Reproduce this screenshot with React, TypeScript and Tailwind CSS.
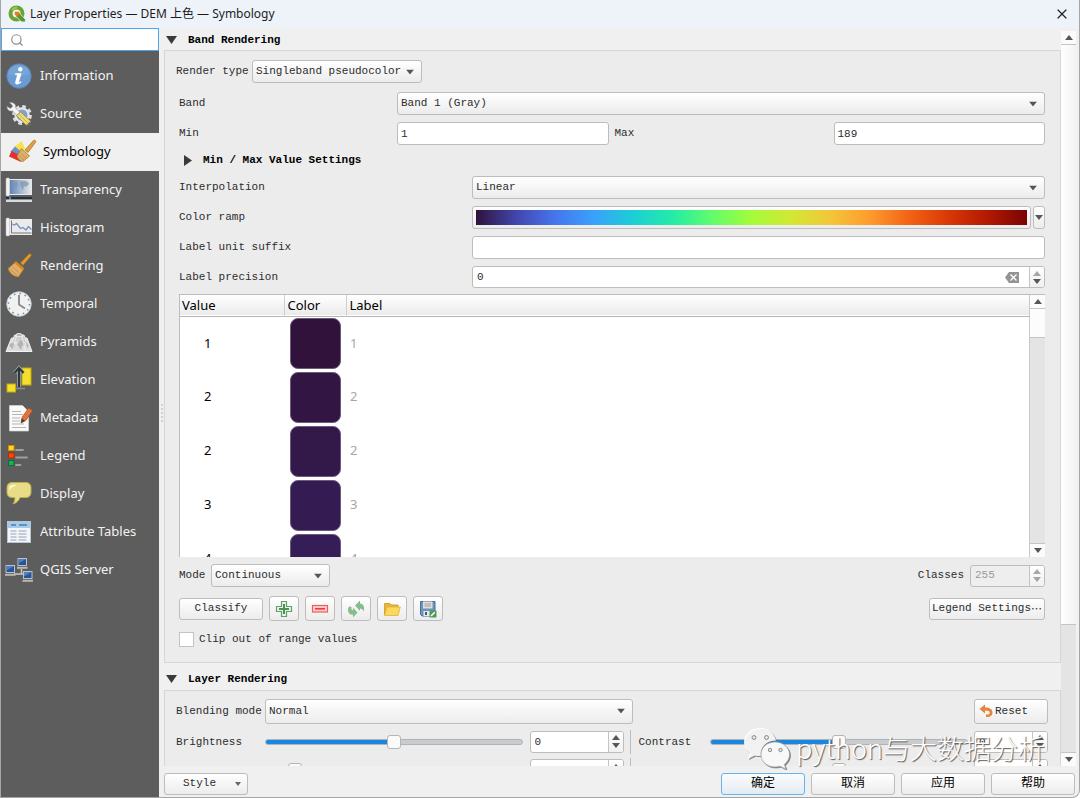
import React, { useState } from 'react';
import { Search, X } from 'lucide-react';
import clsx from 'clsx';

const MONO = "font-['Liberation_Mono','Noto_Sans_CJK_SC',monospace] text-[11px]";

const RAISED = 'rounded-[3px] border border-[#bdbdbd] bg-linear-to-b from-white to-[#ececec]';

const TURBO = [
  '#30123b', '#4145ab', '#4675ed', '#39a2fc', '#1bcfd4', '#24eca6', '#61fc6c',
  '#a4fc3b', '#d1e834', '#f3c63a', '#fe9b2d', '#f36315', '#d93806', '#b11901', '#7a0402',
];

interface RampEntry {
  value: number;
  swatch: string;
}

const rampEntries: RampEntry[] = [
  { value: 1, swatch: 'bg-[#30123b]' },
  { value: 2, swatch: 'bg-[#321543]' },
  { value: 2, swatch: 'bg-[#33184a]' },
  { value: 3, swatch: 'bg-[#341b51]' },
  { value: 4, swatch: 'bg-[#351e58]' },
];

/* ---------- icons ---------- */

const QgisLogo = () => (
  <svg viewBox="0 0 18 18" className="size-[18px]" aria-hidden="true">
    <circle cx="8.5" cy="8.5" r="6" fill="none" stroke="#6aa52f" strokeWidth="4" />
    <path d="M4 5a6 6 0 0 1 5-2.5" fill="none" stroke="#9cc94f" strokeWidth="2" />
    <path d="M8 8h3.4l6 6.4V17h-3.8L8 11.4z" fill="#589632" stroke="#eef4fb" strokeWidth=".8" />
    <path d="M6.8 6.8h3.8l1.4 1.8-2.8 2.6-2.4-1.4z" fill="#ee7913" />
  </svg>
);

const InformationIcon = () => (
  <>
    <circle cx="13" cy="13" r="12.3" fill="#6c9bd2" stroke="#4f7fb8" strokeWidth=".8" />
    <path d="M2 11a11.2 11.2 0 0 1 22 0c-6 3-16 3-22 0z" fill="#8ab2de" opacity=".4" />
    <circle cx="14.3" cy="6.3" r="2.2" fill="#fff" />
    <path d="M9.2 10.3h6.400l-2.500 8.300c-.2.8.4.8 1.700-.4l.9.9c-3.200 3.500-7.400 3.200-6.400-.3l1.700-6.200c.2-.8-.4-1-1.900-.9z" fill="#fff" />
  </>
);

const SourceIcon = () => (
  <>
    <circle cx="16" cy="14" r="8.4" fill="none" stroke="#dedede" strokeWidth="3" strokeDasharray="3.6 3" />
    <circle cx="16" cy="14" r="6.6" fill="#7da3cf" stroke="#e6e6e6" strokeWidth="2.2" />
    <path d="M3.5 1.5c4-.6 6.8 2 6.2 5.5l4.2 4.2-3 3.2-4.3-4.5C3 10.700 1 8.400 1 5.500l3.600 2 2.300-2.400z" fill="#f4f4f2" stroke="#9b9b9b" strokeWidth=".7" />
    <path d="m10.500 14.500 4-3.500 10 9-.5 3.500-4 .5z" fill="#f0dc7a" stroke="#9c8a3e" strokeWidth=".8" />
    <path d="m12.500 13 9.500 9" stroke="#b9a552" strokeWidth=".8" />
    <path d="m21 23.500 3-.2.5-2.600z" fill="#444" />
  </>
);

const SymbologyIcon = () => (
  <>
    <path d="M5 8 13 2l3 8-8 5z" fill="#f6e24c" />
    <path d="M1.500 12.500 6 7.500l6 5-5 6z" fill="#6a94cc" />
    <path d="M0 17.500 2.500 12l8 4 1.500 7z" fill="#e3322b" />
    <path d="m16 11 8.500-9.500c1.400-1 2.800.4 2 1.800L19 13.500z" fill="#e0a040" stroke="#a76c1c" strokeWidth=".7" />
    <path d="m12.500 9.500 8 7.500-6.500 5.500c-3.500-.6-5.600-3-6-5.500z" fill="#ddb06a" stroke="#a9762c" strokeWidth=".8" />
    <path d="m10 17 5 4m-3-6 5 4" stroke="#b98441" strokeWidth=".7" />
  </>
);

const TransparencyIcon = () => (
  <>
    <defs>
      <linearGradient id="fade" x1="0" x2="1">
        <stop offset="0" stopColor="#5f86b8" />
        <stop offset="1" stopColor="#e4e8ec" />
      </linearGradient>
    </defs>
    <rect x="1" y="2" width="25" height="16" fill="#e8e8e8" />
    <rect x="4" y="3" width="21" height="14" fill="url(#fade)" />
    <path d="M6 6c3-2 6-1 6 1s-2 2-2 5c-2-1-4-4-4-6zm8-1c4-2 8-1 9 2-1 2-2 1-3 3l-2-1-1 4c-2-1-3-6-3-8z" fill="#8296ae" opacity=".75" />
    <rect x="0" y="1" width="3.500" height="18" rx="1" fill="#f2f2f2" stroke="#b8b8b8" strokeWidth=".5" />
    <rect x="0" y="20" width="26" height="2.500" fill="#25313d" />
    <rect x="3" y="19.500" width="2" height="3.500" fill="#4b86c6" />
    <rect x="0" y="22.500" width="26" height="2.500" fill="#d9d9d9" />
  </>
);

const HistogramIcon = () => (
  <>
    <rect x="1" y="4" width="25" height="16" fill="#ebebeb" />
    <path d="M5.500 5.500v12.500h20" fill="none" stroke="#777" strokeWidth="1" />
    <path d="m6 9 2.500 1 2-1.500 4 5 2.500-1 3 2.500 2.500-3.500 3 3" fill="none" stroke="#7296c0" strokeWidth="1.300" />
    <rect x="0" y="3" width="3.500" height="18" rx="1" fill="#f3f3f3" stroke="#b8b8b8" strokeWidth=".5" />
  </>
);

const RenderingIcon = () => (
  <>
    <path d="m14.500 10 8.500-9c1.400-.8 2.800.5 2 1.900L17 12.500z" fill="#e59b33" stroke="#a86a17" strokeWidth=".7" />
    <path d="m10 8.500 8 7-5.500 8.500C7 23.500 3 19.500 2 15.500z" fill="#e0b06a" stroke="#a6712a" strokeWidth=".8" />
    <path d="m3.500 16 8 6.500M6 13.500l7.500 6.500" stroke="#c08a45" strokeWidth=".8" />
    <path d="m10 8.500 8 7-1.300 2-8.500-7.300z" fill="#d98c26" />
  </>
);

const TemporalIcon = () => (
  <>
    <circle cx="13" cy="13" r="12.300" fill="#f1f1f0" stroke="#c8c8c8" strokeWidth=".8" />
    <circle cx="13" cy="13" r="10.500" fill="none" stroke="#5c8fc9" strokeWidth="1.500" strokeDasharray="1.500 4" />
    <path d="M13 4v9.500l6 4" fill="none" stroke="#8a8a8a" strokeWidth="1.900" />
  </>
);

const PyramidsIcon = () => (
  <>
    <path d="M5.500 9h15.500l5 13.500H0z" fill="#dcdcdc" stroke="#f2f2f2" strokeWidth="1" />
    <path d="M8.500 6h9.500l3 8H6z" fill="#cfcfcf" stroke="#f0f0f0" strokeWidth=".9" />
    <path d="M11 4.500h4l2 3H9.500z" fill="#b5b5b5" stroke="#ededed" strokeWidth=".8" />
    <path d="m3 16 4-3 2 4-2 4zm8-1 4-4 4 4-3 2-1 4zm9-3 3 5-2 2z" fill="#a9a9a9" opacity=".8" />
    <path d="M6.500 22.500 11 5m8.500 17.500L15.500 5" stroke="#f4f4f4" strokeWidth=".7" />
  </>
);

const ElevationIcon = () => (
  <>
    <rect x="16" y="1" width="9" height="17" fill="#f2e02a" stroke="#c7a90c" />
    <rect x="1" y="17" width="8.500" height="8" fill="#f2e02a" stroke="#c7a90c" />
    <path d="M10 21.500h9" stroke="#8b8b8b" strokeWidth="1.500" />
    <path d="M13 20V2M8.500 6 13 1l4.500 5" fill="none" stroke="#9aa4a8" strokeWidth="3.600" />
    <path d="M13 20V2M8.500 6 13 1l4.500 5" fill="none" stroke="#2d373c" strokeWidth="2" />
  </>
);

const MetadataIcon = () => (
  <>
    <path d="M3.500.500h13l6 6V26h-19z" fill="#fafafa" stroke="#d6d6d6" strokeWidth=".7" />
    <path d="M6 6.500h9M6 9.500h11M6 13h8M6 16h8M6 19h12M6 22.500h14" stroke="#b4b4b4" strokeWidth="1.200" />
    <path d="m15 18 1-5.500L22.500 3l4 2.600-6.500 9.800z" fill="#e2733d" stroke="#a94f23" strokeWidth=".7" />
    <path d="m15 18 .8-4.500 3.200 2.200z" fill="#3c3c3c" />
  </>
);

const LegendIcon = () => (
  <>
    <rect x="2.500" y="2.500" width="5.500" height="5" fill="#ffd52b" stroke="#d28a00" />
    <rect x="2.500" y="10" width="5.500" height="5" fill="#fa4616" stroke="#b82d00" />
    <rect x="2.500" y="17.500" width="5.500" height="5" fill="#16b25c" stroke="#0c6b36" />
    <path d="M10 7h7M10 14.500h11M10 22h4.500" stroke="#9f9f9f" strokeWidth="1.800" strokeLinecap="round" />
  </>
);

const DisplayIcon = () => (
  <>
    <path d="M6 1.500h14c3 0 5 2 5 5v5c0 3-2 5-5 5h-6c-1 3-3.500 5.500-7 6.500 1.500-2 2-4 1.800-6.500H6c-3 0-5-2-5-5v-5c0-3 2-5 5-5z" fill="#e8dc86" stroke="#bcae4d" />
    <path d="M3.500 10V7.500c0-2 1.200-3.400 3.500-3.400h5c-4 .8-7 2-8.500 5.900z" fill="#fffbe2" />
  </>
);

const AttributeTablesIcon = () => (
  <>
    <rect x="1.500" y="2.500" width="23" height="21" fill="#f3f5f6" stroke="#b5c6d6" />
    <rect x="2" y="3" width="22" height="6" fill="#a5cbe8" />
    <path d="M5 6h5m3 0h8" stroke="#4e7eae" strokeWidth="1.300" />
    <path d="M4.500 12h6m2 0h8M4.500 15h6m2 0h8M4.500 18h6m2 0h8M4.500 21h6m2 0h8" stroke="#8fa6c4" strokeWidth="1.200" />
  </>
);

const Computer = ({ x, y }: { x: number; y: number }) => (
  <g transform={`translate(${x} ${y})`}>
    <rect x="1" y="0" width="8.500" height="7" fill="#27549b" stroke="#b9c1c8" />
    <path d="M1.500.500h7.500L1.500 5z" fill="#5580c0" />
    <path d="M0 9.300h10.500" stroke="#b9b9b0" strokeWidth="2" />
  </g>
);

const ServerIcon = () => (
  <>
    <path d="M15.500 12v5M8 17h9" stroke="#c9c9c3" strokeWidth="1.500" />
    <Computer x={-1} y={8.500} />
    <Computer x={11} y={1.500} />
    <Computer x={16.500} y={14.500} />
  </>
);

const AddIcon = () => (
  <svg viewBox="0 0 18 18" className="size-[18px]" aria-hidden="true">
    <path d="M6.500 1.500h5v5h5v5h-5v5h-5v-5h-5v-5h5z" fill="#e9f3e9" stroke="#62a169" strokeWidth="1.200" />
    <path d="M9 4v10M4 9h10" stroke="#4a9153" strokeWidth="2" />
  </svg>
);

const RemoveIcon = () => (
  <svg viewBox="0 0 18 18" className="size-[18px]" aria-hidden="true">
    <rect x="1.500" y="5.500" width="15" height="6.500" fill="#fbd0d0" stroke="#f15b5b" strokeWidth="1.200" />
    <path d="M4 8.800h10" stroke="#e84040" strokeWidth="1.700" />
  </svg>
);

const ReloadIcon = () => (
  <svg viewBox="0 0 18 18" className="size-[18px]" aria-hidden="true">
    <path d="M8 5.500 13 .500v3c3.500.5 5 3.500 3.500 8-.8-2.200-1.800-3-3.500-3V11z" fill="#85bd8b" />
    <path d="M10.500 12.500 6 17.500v-2.800C2 15 0 11.500 1.500 7.500c.5-1.500 3.500-1 3 .5-.4 1.400.2 2 1.500 2V7.500z" fill="#85bd8b" />
  </svg>
);

const FolderIcon = () => (
  <svg viewBox="0 0 18 18" className="size-[18px]" aria-hidden="true">
    <path d="M1.500 15V3.500h5.500L8.500 5H15v3" fill="#e5b83c" stroke="#cfa02c" strokeWidth=".9" />
    <path d="M1.500 15.500 4 7h13.300L15 15.500z" fill="#fcd95d" stroke="#e0b23a" strokeWidth=".8" />
  </svg>
);

const SaveIcon = () => (
  <svg viewBox="0 0 18 18" className="size-[18px]" aria-hidden="true">
    <path d="M1.500 1.500h14.500v14.500H3l-1.500-1.500z" fill="#6d93bd" stroke="#4a6f99" />
    <rect x="4" y="1.500" width="9.500" height="7" fill="#dedede" />
    <path d="M5.500 4h6.500M5.500 6h6.500" stroke="#999" strokeWidth=".9" />
    <rect x="4.500" y="11" width="7" height="5" fill="#e7e7e7" />
    <rect x="6" y="12" width="2" height="3" fill="#3d5a7c" />
    <rect x="10.500" y="10.500" width="7" height="7" rx="1" fill="#4f9a57" />
    <path d="m12 16 3.800-3.800" stroke="#fff" strokeWidth="1.500" />
  </svg>
);

const UndoIcon = () => (
  <svg viewBox="0 0 14 14" className="size-[14px]" aria-hidden="true">
    <path d="M.500 5 6 .500v3c5 0 7.500 2 7.500 5S11 13.500 7 13v-2.500c2.500.3 3.700-.3 3.700-1.700S9.500 6.500 6 6.500v3z" fill="#e8833f" />
  </svg>
);

const Triangle = ({ className }: { className?: string }) => (
  <svg viewBox="0 0 8 5" className={clsx('h-[5px] w-2 fill-[#565656]', className)} aria-hidden="true">
    <path d="M0 0h8L4 5z" />
  </svg>
);

/* ---------- controls ---------- */

interface ComboProps {
  id: string;
  options: string[];
  className?: string;
  height?: string;
}

const Combo: React.FC<ComboProps> = ({ id, options, className, height = 'h-[23px]' }) => (
  <div className={clsx('relative', className)}>
    <select id={id} className={clsx('block w-full appearance-none pr-5 pl-[3px] outline-none', height, RAISED)}>
      {options.map(option => (
        <option key={option}>{option}</option>
      ))}
    </select>
    <Triangle className="pointer-events-none absolute top-1/2 right-2 -translate-y-1/2" />
  </div>
);

interface SpinProps {
  id: string;
  value: string;
  label?: string;
  className?: string;
  disabled?: boolean;
  atMinimum?: boolean;
  clearable?: boolean;
}

const SpinBox: React.FC<SpinProps> = ({ id, value, label, className, disabled, atMinimum, clearable }) => (
  <div
    className={clsx(
      'flex h-[22px] items-stretch overflow-hidden rounded-[3px] border border-[#bdbdbd]',
      disabled ? 'bg-[#eeeeee] text-[#9a9a9a]' : 'bg-white',
      className,
    )}
  >
    <input id={id} aria-label={label} defaultValue={value} disabled={disabled} className="w-0 grow pl-1 outline-none" />
    {clearable && (
      <button type="button" aria-label="Clear" className="mr-[10px]">
        <svg viewBox="0 0 14 11" className="h-[11px] w-[14px]" aria-hidden="true">
          <path d="M4 0h10v11H4L0 5.500z" fill="#949494" />
          <path d="m5.500 2.500 6 6m0-6-6 6" stroke="#fff" strokeWidth="1.400" />
        </svg>
      </button>
    )}
    <div className="flex w-[15px] flex-col items-center justify-center gap-[3px] border-l border-[#c4c4c4] bg-linear-to-b from-white to-[#f0f0f0]">
      <button type="button" aria-label="Increase">
        <Triangle className={clsx('rotate-180', (atMinimum || disabled) && 'opacity-50')} />
      </button>
      <button type="button" aria-label="Decrease">
        <Triangle className={clsx(disabled && 'opacity-50')} />
      </button>
    </div>
  </div>
);

const Slider = ({ id, initial, label }: { id: string; initial: number; label?: string }) => {
  const [value, setValue] = useState(initial);
  return (
    <input
      id={id}
      type="range"
      aria-label={label}
      value={value}
      onChange={e => setValue(Number(e.target.value))}
      style={{ backgroundImage: `linear-gradient(to right, #1c86dd ${value}%, #cbcbcb ${value}%)` }}
      className="h-[6px] w-full min-w-0 appearance-none rounded-sm border border-[#a9b4bd] [&::-webkit-slider-thumb]:size-[14px] [&::-webkit-slider-thumb]:appearance-none [&::-webkit-slider-thumb]:rounded-[3px] [&::-webkit-slider-thumb]:border [&::-webkit-slider-thumb]:border-[#b5b5b5] [&::-webkit-slider-thumb]:bg-[#fafafa]"
    />
  );
};

const ToolButton = ({ label, children }: { label: string; children: React.ReactNode }) => (
  <button type="button" aria-label={label} className={clsx('flex h-[25px] w-[30px] items-center justify-center', RAISED)}>
    {children}
  </button>
);

const GroupTitle = ({ children }: { children: React.ReactNode }) => (
  <h2 className="flex items-center gap-[11px] pl-[2px] font-bold text-black">
    <svg viewBox="0 0 11 8" className="h-2 w-[11px]" aria-hidden="true">
      <path d="M0 0h11L5.500 8z" fill="#3a3a3a" />
    </svg>
    {children}
  </h2>
);

const ScrollButton = ({ down }: { down?: boolean }) => (
  <button
    type="button"
    aria-label={down ? 'Scroll down' : 'Scroll up'}
    className="flex h-[14px] w-full shrink-0 items-center justify-center border-[#c4c4c4] bg-[#fbfbfb] not-last:border-b last:border-t"
  >
    <Triangle className={clsx(!down && 'rotate-180')} />
  </button>
);

const field = 'h-[23px] w-full min-w-0 rounded-[3px] border border-[#bdbdbd] bg-white px-[3px] outline-none';

/* ---------- sections ---------- */

interface Page {
  name: string;
  Icon: React.FC;
}

const pages: Page[] = [
  { name: 'Information', Icon: InformationIcon },
  { name: 'Source', Icon: SourceIcon },
  { name: 'Symbology', Icon: SymbologyIcon },
  { name: 'Transparency', Icon: TransparencyIcon },
  { name: 'Histogram', Icon: HistogramIcon },
  { name: 'Rendering', Icon: RenderingIcon },
  { name: 'Temporal', Icon: TemporalIcon },
  { name: 'Pyramids', Icon: PyramidsIcon },
  { name: 'Elevation', Icon: ElevationIcon },
  { name: 'Metadata', Icon: MetadataIcon },
  { name: 'Legend', Icon: LegendIcon },
  { name: 'Display', Icon: DisplayIcon },
  { name: 'Attribute Tables', Icon: AttributeTablesIcon },
  { name: 'QGIS Server', Icon: ServerIcon },
];

const Sidebar = () => {
  const [current, setCurrent] = useState('Symbology');

  return (
    <aside className="flex w-[158px] shrink-0 flex-col bg-[#5d5d5d]">
      <label className="flex h-[23px] items-center border border-[#4da6ef] bg-white pl-2">
        <Search className="size-[14px] text-[#8d8d8d]" strokeWidth={2} />
        <input aria-label="Search" className="w-0 grow outline-none" />
      </label>
      <nav className="mt-[6px] flex flex-col">
        {pages.map(({ name, Icon }) => (
          <button
            key={name}
            type="button"
            onClick={() => setCurrent(name)}
            className={clsx(
              'flex h-[38px] items-center gap-2 text-left text-[13px]',
              name === current ? 'bg-[#f0f0f0] pl-2 text-black' : 'pl-[5px] text-[#f2f2f2]',
            )}
          >
            <svg viewBox="0 0 26 26" className="size-[26px] overflow-visible" aria-hidden="true">
              <Icon />
            </svg>
            {name}
          </button>
        ))}
      </nav>
    </aside>
  );
};

const RampTable = () => (
  <div className="flex h-[263px] border-t border-l border-[#bdbdbd] bg-white font-['Noto_Sans',sans-serif] text-[13px] text-black">
    <div className="min-w-0 grow overflow-hidden">
      <table className="w-full table-fixed border-collapse">
        <thead>
          <tr className="h-[21px] border-b border-[#b5b5b5] bg-linear-to-b from-white to-[#ebebeb] text-left leading-5">
            <th className="w-[104px] border-r border-[#cfcfcf] pl-[2px] font-normal">Value</th>
            <th className="w-[62px] border-r border-[#cfcfcf] pl-[3px] font-normal">Color</th>
            <th className="pl-[3px] font-normal">Label</th>
          </tr>
        </thead>
        <tbody>
          {rampEntries.map((entry, i) => (
            <tr key={i} className="h-[54px]">
              <td className="pl-6">{entry.value}</td>
              <td className="pl-[6px]">
                <div className={clsx('size-[51px] rounded-lg border border-[#6d5a80]', entry.swatch)} />
              </td>
              <td className="pl-1 text-[#a6a6a6]">{entry.value}</td>
            </tr>
          ))}
        </tbody>
      </table>
    </div>
    <div className="flex w-4 shrink-0 flex-col border-l border-[#c9c9c9] bg-[#e4e4e4]">
      <ScrollButton />
      <div className="h-[29px] border-b border-[#c4c4c4] bg-[#fcfcfc]" />
      <div className="grow" />
      <ScrollButton down />
    </div>
  </div>
);

const BandRendering = () => (
  <section>
    <div className="flex h-[22px] items-center pt-[2px]">
      <GroupTitle>Band Rendering</GroupTitle>
    </div>
    <div className="border border-[#d6d6d6] bg-[#ececec] pt-[9px] pr-[15px] pb-[14px] pl-[14px]">
      <div className="-ml-[3px] flex items-center">
        <label htmlFor="render-type" className="w-[76px] whitespace-nowrap">Render type</label>
        <Combo id="render-type" options={['Singleband pseudocolor', 'Singleband gray']} className="w-[170px]" />
      </div>

      <div className="mt-[9px] grid grid-cols-[218px_1fr_225px_1fr] items-center gap-y-[7px]">
        <label htmlFor="band">Band</label>
        <Combo id="band" options={['Band 1 (Gray)']} className="col-span-3" />
        <label htmlFor="min">Min</label>
        <input id="min" defaultValue="1" className={field} />
        <label htmlFor="max" className="pl-[6px]">Max</label>
        <input id="max" defaultValue="189" className={field} />
      </div>

      <h3 className="flex h-[31px] items-center gap-[11px] pl-[5px] font-bold text-black">
        <svg viewBox="0 0 8 11" className="h-[11px] w-2" aria-hidden="true">
          <path d="M0 0v11l8-5.500z" fill="#3a3a3a" />
        </svg>
        Min / Max Value Settings
      </h3>

      <div className="grid grid-cols-[293px_1fr] items-center gap-y-[7px]">
        <label htmlFor="interpolation">Interpolation</label>
        <Combo id="interpolation" options={['Linear', 'Discrete', 'Exact']} />
        <span>Color ramp</span>
        <div className="flex gap-[2px]">
          <button type="button" aria-label="Color ramp" className={clsx('h-[23px] grow p-[3px]', RAISED)}>
            <div
              className="h-full w-full"
              style={{ backgroundImage: `linear-gradient(to right, ${TURBO.join(', ')})` }}
            />
          </button>
          <button type="button" aria-label="Ramp menu" className={clsx('flex w-3 items-center justify-center', RAISED)}>
            <Triangle className="shrink-0" />
          </button>
        </div>
        <label htmlFor="suffix">Label unit suffix</label>
        <input id="suffix" className={field} />
        <label htmlFor="precision">Label precision</label>
        <SpinBox id="precision" value="0" clearable atMinimum />
      </div>

      <div className="mt-[6px]">
        <RampTable />
      </div>

      <div className="mt-[7px] flex items-center justify-between">
        <div className="flex items-center">
          <label htmlFor="mode" className="w-8">Mode</label>
          <Combo id="mode" options={['Continuous', 'Equal interval', 'Quantile']} className="w-[119px]" />
        </div>
        <div className="flex items-center gap-[6px]">
          <label htmlFor="classes">Classes</label>
          <SpinBox id="classes" value="255" disabled className="w-[75px]" />
        </div>
      </div>

      <div className="mt-[9px] flex items-center justify-between">
        <div className="flex items-center gap-[6px]">
          <button type="button" className={clsx('h-[22px] w-[84px]', RAISED)}>Classify</button>
          <ToolButton label="Add value"><AddIcon /></ToolButton>
          <ToolButton label="Remove value"><RemoveIcon /></ToolButton>
          <ToolButton label="Reload classes"><ReloadIcon /></ToolButton>
          <ToolButton label="Load color map"><FolderIcon /></ToolButton>
          <ToolButton label="Save color map"><SaveIcon /></ToolButton>
        </div>
        <button type="button" className={clsx('flex h-[22px] w-[116px] items-center justify-center whitespace-nowrap', RAISED)}>
          Legend Settings
          <span lang="zh-CN" className="font-['Noto_Sans_CJK_SC',sans-serif]">…</span>
        </button>
      </div>

      <label className="mt-[10px] flex items-center gap-[5px]">
        <input type="checkbox" className="size-[15px] appearance-none border border-[#c3c3c3] bg-white" />
        Clip out of range values
      </label>
    </div>
  </section>
);

const LayerRendering = () => (
  <section>
    <div className="flex h-[27px] items-center pt-[6px]">
      <GroupTitle>Layer Rendering</GroupTitle>
    </div>
    <div className="border border-[#d6d6d6] bg-[#ececec] px-3 pt-2 pb-4 pl-[11px]">
      <div className="flex items-center">
        <label htmlFor="blending" className="w-[89px] whitespace-nowrap">Blending mode</label>
        <Combo id="blending" options={['Normal', 'Multiply', 'Screen']} className="w-[368px]" height="h-[25px]" />
        <button type="button" className={clsx('ml-auto flex h-[25px] w-[74px] items-center gap-[2px] pl-1', RAISED)}>
          <UndoIcon />
          Reset
        </button>
      </div>
      <div className="mt-[6px] grid grid-cols-[89px_1fr_94px_86px_1fr_74px] items-center gap-y-1">
        <label htmlFor="brightness">Brightness</label>
        <div className="flex pr-[7px]"><Slider id="brightness" initial={50} /></div>
        <SpinBox id="brightness-value" label="Brightness value" value="0" />
        <label htmlFor="contrast" className="ml-[6px] border-l border-[#bdbdbd] py-1 pl-2">Contrast</label>
        <div className="flex pr-[6px]"><Slider id="contrast" initial={50} /></div>
        <SpinBox id="contrast-value" label="Contrast value" value="0" />
        <div />
        <div className="flex pr-[7px]"><Slider id="saturation" label="Saturation" initial={9} /></div>
        <SpinBox id="saturation-value" label="Saturation value" value="" />
        <div className="ml-[6px] h-6 border-l border-[#bdbdbd]" />
        <div className="flex pr-[6px]"><Slider id="gamma" label="Gamma" initial={50} /></div>
        <SpinBox id="gamma-value" label="Gamma value" value="" />
      </div>
    </div>
  </section>
);

const dialogButton = 'h-[22px] w-[84px] rounded-[3px] border text-[12px] text-black bg-linear-to-b';

const Footer = () => (
  <footer className="flex h-[31px] shrink-0 items-center gap-[6px] pt-1 pr-1">
    <button type="button" className={clsx('mr-auto flex h-[22px] w-[84px] items-center justify-between pr-[6px] pl-[18px]', RAISED)}>
      Style
      <svg viewBox="0 0 6 4" className="h-1 w-[6px] fill-[#666]" aria-hidden="true">
        <path d="M0 0h6L3 4z" />
      </svg>
    </button>
    <button type="button" className={clsx(dialogButton, 'border-[#66b3ee] from-[#fbfcfd] to-[#e3ebf2]')}>确定</button>
    {['取消', '应用', '帮助'].map(text => (
      <button key={text} type="button" className={clsx(dialogButton, 'border-[#bdbdbd] from-white to-[#ececec]')}>
        {text}
      </button>
    ))}
  </footer>
);

const Watermark = () => (
  <div className="pointer-events-none absolute right-[34px] bottom-7 flex items-center gap-[5px]">
    <svg viewBox="0 0 48 42" className="h-[42px] w-12 drop-shadow-[1px_1px_0_#777]" aria-hidden="true">
      <path d="M17 1C8 1 1 7 1 15c0 4.500 2.500 8.500 6 11l-2 6 7-3.500c2 .5 4 .7 6 .5-1.500-8 5-15.500 15-15.500C31.500 6 25 1 17 1z" fill="#fff" fillOpacity=".9" />
      <path d="M32 15c-8 0-14 5.500-14 12.500S24 40 32 40c1.800 0 3.400-.3 5-.8l6 3-1.700-4.700c3-2.300 5.200-6 5.200-10C46.500 20.500 40 15 32 15z" fill="#fff" fillOpacity=".95" stroke="#9a9a9a" strokeWidth=".6" />
      <g fill="#e4e4e4" stroke="#777" strokeWidth=".8">
        <circle cx="11" cy="10.500" r="2" />
        <circle cx="23.500" cy="10.500" r="2" />
        <circle cx="27" cy="23" r="1.700" />
        <circle cx="37.500" cy="23" r="1.700" />
      </g>
    </svg>
    <span className="font-['Noto_Sans_CJK_SC',sans-serif] text-[27px] leading-8 font-light whitespace-nowrap text-white [text-shadow:1px_1px_1px_#555]">
      python与大数据分析
    </span>
  </div>
);

const App: React.FC = () => (
  <div className="relative flex h-screen flex-col overflow-hidden rounded-br-lg border-r border-b border-l border-[#a5a5a5] bg-[#f0f0f0] font-['Noto_Sans','Noto_Sans_CJK_SC',sans-serif]">
    <header className="flex h-7 shrink-0 items-center justify-between bg-[#eef3fa] pr-[9px] pl-[7px]">
      <h1 className="flex items-center gap-1 text-[12px] leading-5 text-[#1c1c1c]">
        <QgisLogo />
        Layer Properties — DEM 上色 — Symbology
      </h1>
      <button type="button" aria-label="Close">
        <X className="size-4 text-[#222]" strokeWidth={1.8} />
      </button>
    </header>

    <div className="flex min-h-0 grow">
      <Sidebar />
      <div className="flex w-[5px] shrink-0 flex-col items-center justify-center gap-[2px]">
        {[0, 1, 2, 3, 4].map(dot => (
          <span key={dot} className="size-[2px] bg-[#d0d0d0]" />
        ))}
      </div>

      <main className={clsx('flex min-w-0 grow flex-col text-[#2c2c2c]', MONO)}>
        <div className="flex min-h-0 grow">
          <div className="min-w-0 grow overflow-hidden">
            <BandRendering />
            <LayerRendering />
          </div>
          <div className="mt-[3px] mr-[3px] flex w-[15px] shrink-0 flex-col bg-[#e4e4e4]">
            <ScrollButton />
            <div className="h-[580px] border-b border-[#c4c4c4] bg-linear-to-r from-white to-[#f3f3f3]" />
            <div className="grow" />
            <ScrollButton down />
          </div>
        </div>
        <Footer />
      </main>
    </div>

    <Watermark />
  </div>
);

export default App;
